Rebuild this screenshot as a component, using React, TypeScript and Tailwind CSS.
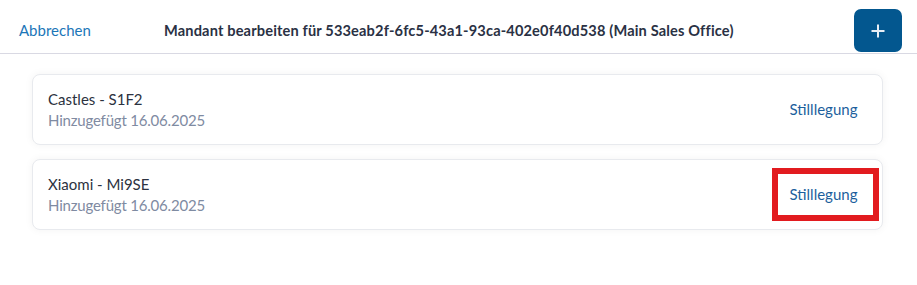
import React from "react";

const items = [
  { name: "Castles - S1F2", date: "Hinzugefügt 16.06.2025", highlight: false },
  { name: "Xiaomi - Mi9SE", date: "Hinzugefügt 16.06.2025", highlight: true },
];

export default function App() {
  return (
    <div
      className="w-[917px] h-[285px] bg-white overflow-hidden"
      style={{ fontFamily: "Lato, 'Open Sans', sans-serif" }}
    >
      <header className="flex items-center pt-[9px] pb-[1px] pl-[19px] pr-[15px] border-b border-[#d9d9e3]">
        <button className="text-[15px] leading-[21px] text-[#1c76b8] w-[145px] text-left">
          Abbrechen
        </button>
        <h1 className="flex-1 text-[14.6px] leading-[21px] font-bold text-[#2a3144] tracking-[0.15px]">
          Mandant bearbeiten für 533eab2f-6fc5-43a1-93ca-402e0f40d538 (Main Sales Office)
        </h1>
        <button className="w-[48px] h-[43px] rounded-[7px] bg-[#03578f] flex items-center justify-center">
          <svg width="16" height="16" viewBox="0 0 16 16">
            <path d="M8 1.5v13M1.5 8h13" stroke="#e8eef5" strokeWidth="2" strokeLinecap="butt" />
          </svg>
        </button>
      </header>
      <div className="flex flex-col gap-[14px] pt-[20px] pl-[32px] pr-[34px]">
        {items.map((it) => (
          <div
            key={it.name}
            className="flex items-center justify-between rounded-[8px] border border-[#e8eaee] bg-white pl-[15px] pr-[3px] py-[8px] shadow-[0_0_8px_rgba(0,0,0,0.05)]"
          >
            <div className="flex flex-col">
              <span className="text-[15px] leading-[21px] text-[#2c3240]">{it.name}</span>
              <span className="text-[15px] leading-[21px] text-[#7f8ba2] tracking-[-0.2px]">{it.date}</span>
            </div>
            <button
              className={`w-[107px] h-[53px] border-[6px] flex items-center justify-center pr-[4px] text-[15px] text-[#1c5f9d] ${
                it.highlight ? "border-[#e21b1f]" : "border-transparent"
              }`}
            >
              Stilllegung
            </button>
          </div>
        ))}
      </div>
    </div>
  );
}
